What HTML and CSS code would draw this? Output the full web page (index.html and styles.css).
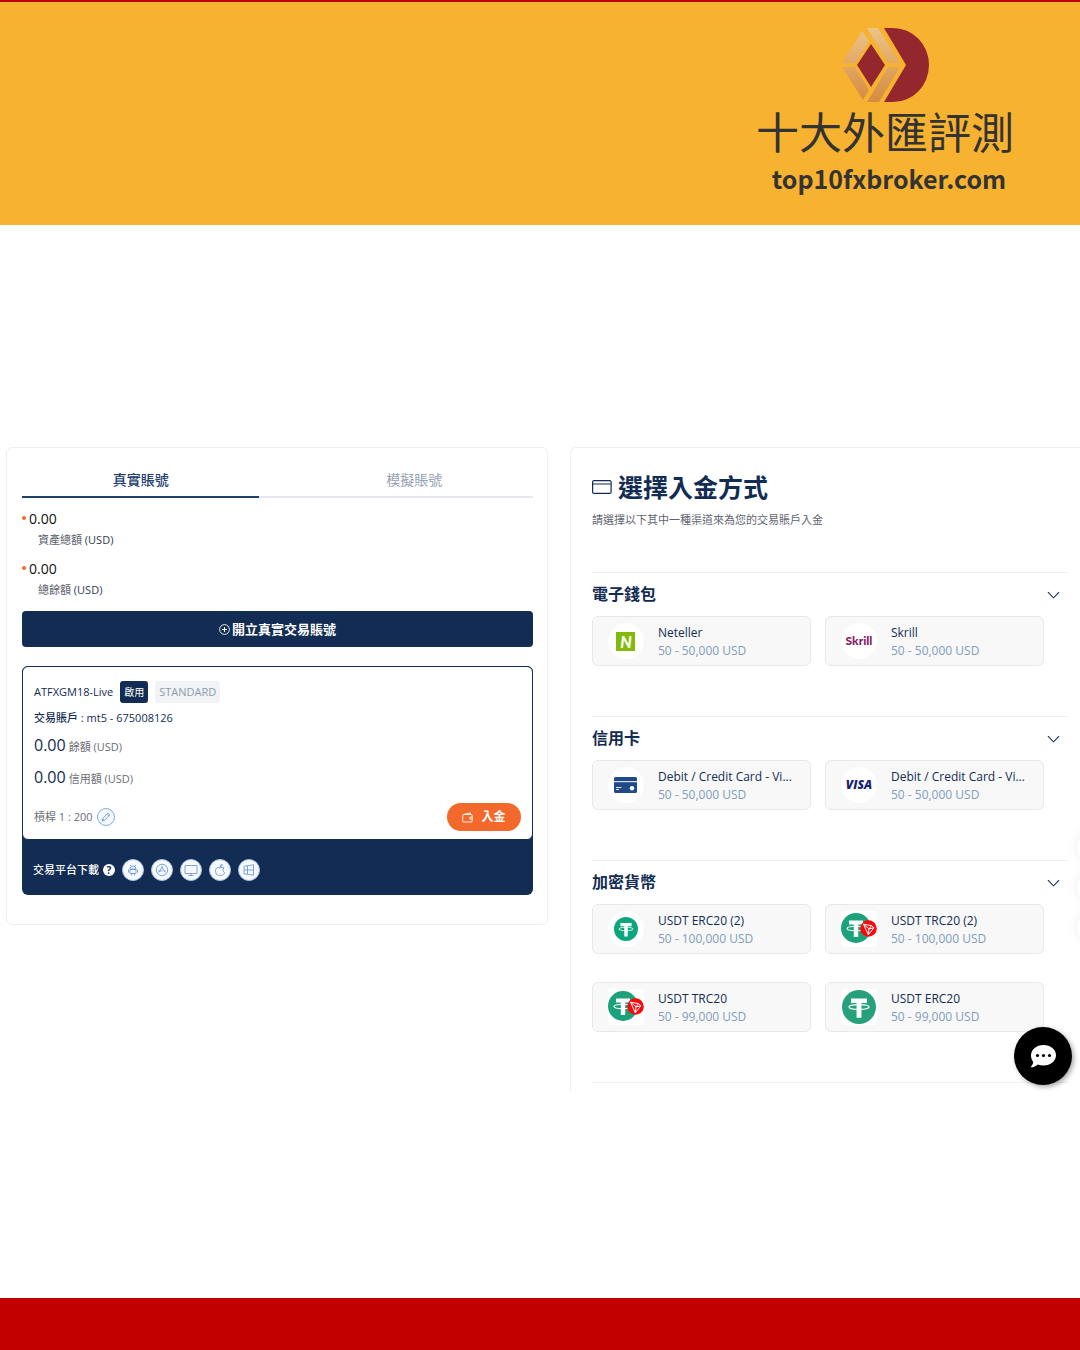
FILE: index.html
```html
<!DOCTYPE html>
<html lang="zh-Hant">

<head>
    <meta charset="UTF-8">
    <meta name="viewport" content="width=device-width, initial-scale=1">
    <title>十大外匯評測</title>
    <link rel="stylesheet" href="styles.css">
</head>

<body>
    <svg width="0" height="0" class="sprite" aria-hidden="true">
        <symbol id="chevron" viewBox="0 0 14 8">
            <path d="M1 1l6 6 6-6" fill="none" stroke="currentColor" stroke-width="1.2" />
        </symbol>
        <symbol id="tether" viewBox="0 0 32 32">
            <circle cx="16" cy="16" r="16" fill="currentColor" />
            <path d="M8.500 8h15v4.200h-5.200V26h-4.600V12.200H8.500z" fill="#fff" />
            <ellipse cx="16" cy="16" rx="9.500" ry="2.300" fill="none" stroke="#fff" stroke-width="1.100" />
        </symbol>
        <symbol id="tether-tron" viewBox="0 0 36 32">
            <circle cx="15" cy="15" r="15" fill="#1ba27a" />
            <path d="M8 7.500h14v4H17.200V24h-4.400V11.500H8z" fill="#fff" />
            <ellipse cx="15" cy="15.500" rx="9" ry="2.200" fill="none" stroke="#fff" stroke-width="1.100" />
            <circle cx="27.500" cy="15.500" r="8.300" fill="#ff060a" />
            <path d="M22.500 11.200l8 1.400 2.400 2.200-5.600 7zM22.500 11.200l5.500 4.600 4.900-1M28 15.800l2.500-3.200M28 15.800l-.7 6" fill="none" stroke="#fff" stroke-width="1" stroke-linejoin="round" />
        </symbol>
    </svg>

    <header class="banner">
        <div class="brand">
            <svg class="brand-mark" viewBox="0 0 87 74" aria-hidden="true">
                <defs>
                    <linearGradient id="gold" gradientUnits="userSpaceOnUse" x1="0" y1="0" x2="0" y2="74">
                        <stop offset="0" stop-color="#edc488" />
                        <stop offset="1" stop-color="#d58b3d" />
                    </linearGradient>
                </defs>
                <path d="M42 0h9a36 37 0 0 1 0 74h-9l22-37z" fill="#93272d" />
                <path d="M29 16l14 21-14 22-14-22z" fill="#93272d" />
                <path d="M20 3l7 10-13 22H0zM25 0h11l22 35H46zM0 39h13l14 23-6 10zM46 39h12L37 74H25z" fill="url(#gold)" />
            </svg>
            <h1>十大外匯評測</h1>
            <p>top10fxbroker.com</p>
        </div>
    </header>

    <main class="portal">
        <section class="accounts">
            <div class="tabs" role="tablist">
                <button class="tab active" type="button" role="tab" aria-selected="true">真實賬號</button>
                <button class="tab" type="button" role="tab" aria-selected="false">模擬賬號</button>
            </div>

            <dl class="totals">
                <div class="total">
                    <dd>0.00</dd>
                    <dt>資產總額 <span>(USD)</span></dt>
                </div>
                <div class="total">
                    <dd>0.00</dd>
                    <dt>總餘額 <span>(USD)</span></dt>
                </div>
            </dl>

            <button class="open-account" type="button">
                <svg width="11" height="11" viewBox="0 0 11 11" fill="none" stroke="currentColor" aria-hidden="true">
                    <circle cx="5.500" cy="5.500" r="4.900" stroke-width=".9" />
                    <path d="M5.500 3v5M3 5.500h5" />
                </svg>
                開立真實交易賬號
            </button>

            <article class="account">
                <div class="account-body">
                    <div class="account-head">
                        <span>ATFXGM18-Live</span>
                        <span class="badge on">啟用</span>
                        <span class="badge">STANDARD</span>
                    </div>
                    <p class="login">交易賬戶 : mt5 - 675008126</p>
                    <p class="amount"><b>0.00</b> 餘額 (USD)</p>
                    <p class="amount"><b>0.00</b> 信用額 (USD)</p>
                    <div class="account-foot">
                        <span>槓桿 1 : 200</span>
                        <button class="round edit" type="button" aria-label="修改槓桿">
                            <svg width="10" height="10" viewBox="0 0 10 10" fill="none" stroke="currentColor" stroke-width=".8">
                                <path d="M1 9l.6-2.400L7.200 1l1.800 1.800-5.600 5.600zM6 2.200L7.800 4M1.600 6.600l1.800 1.800" />
                            </svg>
                        </button>
                        <button class="deposit" type="button">
                            <svg width="11" height="11" viewBox="0 0 11 11" fill="none" stroke="currentColor" stroke-width=".9" aria-hidden="true">
                                <rect x=".7" y="2.500" width="9.500" height="7.500" rx="1" />
                                <path d="M1.500 2.500L8.500.8v1.700M10.200 5.200H7.800v2h2.400" />
                            </svg>
                            入金
                        </button>
                    </div>
                </div>
                <div class="downloads">
                    <span>交易平台下載</span>
                    <span class="help">?</span>
                    <a class="round" href="#" aria-label="Android">
                        <svg viewBox="0 0 14 14">
                            <path d="M4 6a3 3 0 0 1 6 0zM4 6.500h6v4H4zM5 3L4.200 1.800M9 3l.8-1.200M2.500 6.500v3M11.500 6.500v3M5.500 10.500v2M8.500 10.500v2" />
                        </svg>
                    </a>
                    <a class="round" href="#" aria-label="App Store">
                        <svg viewBox="0 0 14 14">
                            <circle cx="7" cy="7" r="5.700" />
                            <path d="M7.500 3.500l-3.700 6M6.500 3.500l3.700 6M3.200 8h4.300M9.200 8h1.600" />
                        </svg>
                    </a>
                    <a class="round" href="#" aria-label="Desktop">
                        <svg viewBox="0 0 14 14">
                            <path d="M1 2.500h12v8H1zM7 10.500v2M4.500 12.500h5" />
                        </svg>
                    </a>
                    <a class="round" href="#" aria-label="Mac">
                        <svg viewBox="0 0 14 14">
                            <path d="M11 4.800C9.500 3.800 8.200 4.500 7 5 5 3.800 2.500 4.800 2.500 7.800c0 2.200 1.500 4.700 3 4.700.7 0 .9-.4 1.700-.4s1 .4 1.700.4c1.200 0 2.300-1.600 2.700-2.900-2-1-2-3.600-.6-4.800zM7 4c0-1.600 1-2.500 2.200-2.700C9.300 2.800 8.300 3.900 7 4z" />
                        </svg>
                    </a>
                    <a class="round" href="#" aria-label="Windows">
                        <svg viewBox="0 0 14 14">
                            <path d="M2 3.200l3.500-.5v8.600L2 10.800zM5.500 2.700l6-.9v10.400l-6-.9M2 7h9.500" />
                        </svg>
                    </a>
                </div>
            </article>
        </section>

        <section class="payment">
            <h2>
                <svg width="20" height="14" viewBox="0 0 20 14" fill="none" stroke="currentColor" aria-hidden="true">
                    <rect x=".6" y=".6" width="18.500" height="12.800" rx="1.500" stroke-width="1.200" />
                    <path d="M1 4h18" />
                </svg>
                選擇入金方式
            </h2>
            <p class="hint">請選擇以下其中一種渠道來為您的交易賬戶入金</p>

            <div class="group">
                <h3>電子錢包
                    <button type="button" aria-label="收起電子錢包"><svg width="13" height="8"><use href="#chevron" /></svg></button>
                </h3>
                <div class="methods">
                    <button class="method" type="button">
                        <span class="logo"><span class="neteller">N</span></span>
                        <span class="info"><span class="name">Neteller</span><span class="limit">50 - 50,000 USD</span></span>
                    </button>
                    <button class="method" type="button">
                        <span class="logo"><span class="skrill">Skrill</span></span>
                        <span class="info"><span class="name">Skrill</span><span class="limit">50 - 50,000 USD</span></span>
                    </button>
                </div>
            </div>

            <div class="group">
                <h3>信用卡
                    <button type="button" aria-label="收起信用卡"><svg width="13" height="8"><use href="#chevron" /></svg></button>
                </h3>
                <div class="methods">
                    <button class="method" type="button">
                        <span class="logo">
                            <svg width="23" height="16" viewBox="0 0 23 16">
                                <rect width="23" height="16" rx="1.500" fill="#204a87" />
                                <path d="M0 4.700h23" stroke="#fff" />
                                <path d="M2 10.500h5.500M2 12.500h3" stroke="#fff" stroke-width=".9" />
                                <circle cx="18" cy="11.200" r="2.200" fill="#fff" />
                            </svg>
                        </span>
                        <span class="info"><span class="name">Debit / Credit Card - Vi...</span><span class="limit">50 - 50,000 USD</span></span>
                    </button>
                    <button class="method" type="button">
                        <span class="logo"><span class="visa">VISA</span></span>
                        <span class="info"><span class="name">Debit / Credit Card - Vi...</span><span class="limit">50 - 50,000 USD</span></span>
                    </button>
                </div>
            </div>

            <div class="group">
                <h3>加密貨幣
                    <button type="button" aria-label="收起加密貨幣"><svg width="13" height="8"><use href="#chevron" /></svg></button>
                </h3>
                <div class="methods">
                    <button class="method" type="button">
                        <span class="logo usdt"><svg width="24" height="24"><use href="#tether" /></svg></span>
                        <span class="info"><span class="name">USDT ERC20 (2)</span><span class="limit">50 - 100,000 USD</span></span>
                    </button>
                    <button class="method" type="button">
                        <span class="logo square"><svg width="36" height="32"><use href="#tether-tron" /></svg></span>
                        <span class="info"><span class="name">USDT TRC20 (2)</span><span class="limit">50 - 100,000 USD</span></span>
                    </button>
                    <button class="method" type="button">
                        <span class="logo square"><svg width="36" height="32"><use href="#tether-tron" /></svg></span>
                        <span class="info"><span class="name">USDT TRC20</span><span class="limit">50 - 99,000 USD</span></span>
                    </button>
                    <button class="method" type="button">
                        <span class="logo square usdt-large"><svg width="34" height="34"><use href="#tether" /></svg></span>
                        <span class="info"><span class="name">USDT ERC20</span><span class="limit">50 - 99,000 USD</span></span>
                    </button>
                </div>
            </div>
            <hr>

            <div class="side-tools"><i></i><i></i><i></i></div>
            <button class="chat" type="button" aria-label="聊天">
                <svg width="26" height="23" viewBox="0 0 26 23">
                    <path d="M13.500 0C20.500 0 26 4.500 26 10.300s-5.500 10.200-12.500 10.200c-2 0-4-.4-5.700-1.100C6 21 3.500 22.400.5 22.300c1.500-1.400 2.500-3.200 2.700-5.200C1.800 15.300 1 12.900 1 10.300 1 4.500 6.500 0 13.500 0z" fill="#fff" />
                    <circle cx="7.500" cy="10.500" r="1.600" />
                    <circle cx="13.500" cy="10.500" r="1.600" />
                    <circle cx="19.500" cy="10.500" r="1.600" />
                </svg>
            </button>
        </section>
    </main>

    <footer class="bottom-bar"></footer>
</body>

</html>
```

FILE: styles.css
```css
:root {
  --navy: #122c53;
  --red: #c20000;
  --blue: #5a8fe0;
  --line: #eeeff3;
}

* {
  box-sizing: border-box;
}

body {
  margin: 0;
  min-height: 100vh;
  display: flex;
  flex-direction: column;
  background: #fff;
  color: var(--navy);
  font: 11px/16px "Open Sans", "Noto Sans CJK TC", sans-serif;
}

h1, h2, h3, p, dl, dd {
  margin: 0;
}

button {
  padding: 0;
  border: 0;
  background: none;
  color: inherit;
  font: inherit;
  cursor: pointer;
}

svg {
  display: block;
  flex: none;
}

.sprite {
  position: absolute;
}

/* banner */
.banner {
  display: flex;
  justify-content: flex-end;
  padding: 26px 66px 30px;
  border-top: 2px solid var(--red);
  background: #f7b22f;
  color: #333;
}

.brand {
  display: flex;
  flex-direction: column;
  align-items: center;
  font-family: "Noto Sans CJK TC", sans-serif;
}
.brand-mark {
  width: 87px;
  height: 74px;
}
.brand h1 {
  font-size: 43px;
  font-weight: 400;
  line-height: 56px;
}
.brand p {
  padding: 3px 0 0 8px;
  font-size: 25px;
  font-weight: 700;
  line-height: 34px;
}

/* two panels */
.portal {
  flex: 1;
  display: grid;
  grid-template-columns: minmax(0, 17fr) minmax(0, 16fr);
  align-items: start;
  gap: 22px;
  padding: 222px 0 60px 6px;
  overflow: hidden;
}

.accounts {
  padding: 15px 14px 29px 15px;
  border: 1px solid var(--line);
  border-radius: 6px;
}

.tabs {
  display: grid;
  grid-template-columns: 1fr 1fr;
  gap: 36px;
  box-shadow: inset 0 -2px #e6e6ed;
}
.tab {
  height: 35px;
  border-bottom: 2px solid transparent;
  color: #98a1b1;
  font-size: 14px;
}
.tab.active {
  border-color: #213e6d;
  color: #213e6d;
  font-weight: 500;
}

.totals {
  padding: 11px 0 2px;
}
.total {
  display: flex;
  flex-direction: column;
  height: 50px;
}
.total dd {
  display: flex;
  gap: 3px;
  color: #111;
  font-size: 14px;
  line-height: 20px;
}
.total dd::before {
  content: "";
  width: 4px;
  height: 4px;
  margin-top: 7px;
  border-radius: 50%;
  background: #f3692b;
}
.total dt {
  padding: 3px 0 0 16px;
  color: #59616e;
}
.total span {
  color: #333b50;
}

.open-account {
  display: flex;
  justify-content: center;
  align-items: center;
  gap: 2px;
  width: 100%;
  height: 36px;
  border-radius: 4px;
  background: var(--navy);
  color: #fff;
  font-size: 13px;
  font-weight: 700;
}

.account {
  margin-top: 19px;
  border-radius: 6px;
  background: var(--navy);
}
.account-body {
  padding: 14px 11px 8px;
  border: 1px solid var(--navy);
  border-radius: 6px;
  background: #fff;
}
.account-head {
  display: flex;
  align-items: center;
  gap: 7px;
}
.badge {
  padding: 3px 4px;
  border-radius: 3px;
  background: #f1f3f5;
  color: #8b9cae;
}
.badge.on {
  background: var(--navy);
  color: #fff;
  font-size: 10px;
}
.login {
  padding: 7px 0 3px;
  font-weight: 500;
}
.amount {
  display: flex;
  align-items: baseline;
  gap: 3px;
  height: 32px;
  color: #6c6e76;
}
.amount b {
  color: var(--navy);
  font-size: 16px;
  font-weight: 400;
  line-height: 32px;
}
.account-foot {
  display: flex;
  align-items: center;
  gap: 4px;
  padding-top: 10px;
  color: #6c6e76;
}

.round {
  display: flex;
  justify-content: center;
  align-items: center;
  width: 22px;
  height: 22px;
  border: 1px solid #a4c4f3;
  border-radius: 50%;
  background: #f7f9fd;
  color: var(--blue);
}
.round svg {
  width: 14px;
  height: 14px;
  fill: none;
  stroke: currentColor;
  stroke-width: .8;
}
.round.edit {
  width: 18px;
  height: 18px;
  border-color: #7fabf0;
}
.round.edit svg {
  width: 10px;
  height: 10px;
}

.deposit {
  display: flex;
  justify-content: center;
  align-items: center;
  gap: 8px;
  width: 74px;
  height: 28px;
  margin-left: auto;
  border-radius: 14px;
  background: #f3692b;
  color: #fff;
  font-size: 12px;
  font-weight: 700;
}

.downloads {
  display: flex;
  align-items: center;
  gap: 7px;
  padding: 19px 11px 14px;
  color: #fff;
  font-weight: 500;
}
.help {
  width: 12px;
  height: 12px;
  margin-left: -3px;
  border-radius: 50%;
  background: #fff;
  color: var(--navy);
  font-size: 10px;
  font-weight: 700;
  line-height: 12px;
  text-align: center;
}

/* payment methods */
.payment {
  position: relative;
  padding: 20px 12px 7px 21px;
  border: 1px solid var(--line);
  border-width: 1px 0 0 1px;
  border-radius: 6px 0 0 0;
}
.payment h2 {
  display: flex;
  align-items: center;
  gap: 6px;
  font-size: 25px;
  line-height: 38px;
}
.hint {
  padding: 6px 0 44px;
  color: #5f6470;
}

.group {
  padding-bottom: 50px;
  border-top: 1px solid var(--line);
}
.group h3 {
  display: flex;
  justify-content: space-between;
  align-items: center;
  padding-right: 8px;
  font-size: 16px;
  line-height: 43px;
}
.methods {
  display: grid;
  grid-template-columns: repeat(2, minmax(0, 1fr));
  gap: 28px 14px;
  padding-right: 24px;
}
.method {
  display: flex;
  align-items: center;
  gap: 14px;
  height: 50px;
  padding: 0 8px 0 15px;
  border: 1px solid #e7e8ec;
  border-radius: 6px;
  background: #f8f8f8;
  text-align: left;
}
.logo {
  display: flex;
  flex: none;
  justify-content: center;
  align-items: center;
  width: 36px;
  height: 36px;
  border-radius: 50%;
  background: #fff;
}
.logo.square {
  border-radius: 4px;
}
.usdt {
  color: #0ba67c;
}
.usdt-large {
  color: #26a17b;
}
.info {
  min-width: 0;
  padding-top: 2px;
  font-size: 12px;
}
.name, .limit {
  display: block;
  overflow: hidden;
  line-height: 18px;
  text-overflow: ellipsis;
  white-space: nowrap;
}
.limit {
  color: #829cbb;
}

.neteller {
  width: 19px;
  height: 19px;
  background: #83ba0a;
  color: #fff;
  font: italic 900 16px/19px Lato, sans-serif;
  text-align: center;
}
.skrill {
  color: #862165;
  font: 900 12px/16px Lato, sans-serif;
}
.visa {
  color: #1a1f71;
  font: italic 800 12px/16px "Open Sans", sans-serif;
}

.payment hr {
  margin: 0;
  border: 0;
  border-top: 1px solid var(--line);
}

/* floating buttons */
.side-tools {
  position: absolute;
  right: -23px;
  bottom: 148px;
}
.side-tools i {
  display: block;
  width: 26px;
  height: 30px;
  margin-top: 10px;
  border-radius: 50%;
  background: #fff;
  box-shadow: 0 0 12px rgba(0, 0, 0, .08);
}
.chat {
  position: absolute;
  right: 8px;
  bottom: 5px;
  display: flex;
  justify-content: center;
  align-items: center;
  width: 58px;
  height: 58px;
  border-radius: 50%;
  background: #000;
  box-shadow: 2px 2px 5px rgba(0, 0, 0, .35);
}

.bottom-bar {
  height: 52px;
  background: var(--red);
}
```
